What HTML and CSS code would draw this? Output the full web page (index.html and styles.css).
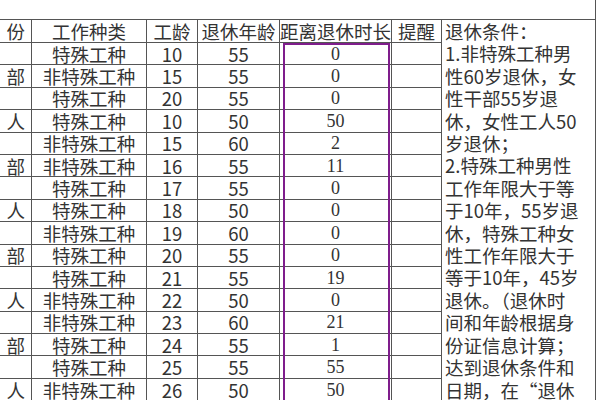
FILE: index.html
```html
<!DOCTYPE html>
<html lang="zh-CN">
<head>
<meta charset="utf-8">
<title>退休提醒表</title>
<link rel="stylesheet" href="styles.css">
</head>
<body>
<div class="topstrip"></div>
<div class="frame">
<div class="sheet">
  <div class="cell head id">份</div>
  <div class="cell head">工作种类</div>
  <div class="cell head">工龄</div>
  <div class="cell head">退休年龄</div>
  <div class="cell head">距离退休时长</div>
  <div class="cell head">提醒</div>
  <div class="note">退休条件：<br>1.非特殊工种男<br>性60岁退休，女<br>性干部55岁退<br>休，女性工人50<br>岁退休；<br>2.特殊工种男性<br>工作年限大于等<br>于10年，55岁退<br>休，特殊工种女<br>性工作年限大于<br>等于10年，45岁<br>退休。（退休时<br>间和年龄根据身<br>份证信息计算；<br>达到退休条件和<br>日期，在“退休</div>

  <div class="cell id"></div><div class="cell">特殊工种</div><div class="cell">10</div><div class="cell">55</div><div class="cell num">0</div><div class="cell"></div>
  <div class="cell id">部</div><div class="cell">非特殊工种</div><div class="cell">15</div><div class="cell">55</div><div class="cell num">0</div><div class="cell"></div>
  <div class="cell id"></div><div class="cell">特殊工种</div><div class="cell">20</div><div class="cell">55</div><div class="cell num">0</div><div class="cell"></div>
  <div class="cell id">人</div><div class="cell">特殊工种</div><div class="cell">10</div><div class="cell">50</div><div class="cell num">50</div><div class="cell"></div>
  <div class="cell id"></div><div class="cell">非特殊工种</div><div class="cell">15</div><div class="cell">60</div><div class="cell num">2</div><div class="cell"></div>
  <div class="cell id">部</div><div class="cell">非特殊工种</div><div class="cell">16</div><div class="cell">55</div><div class="cell num">11</div><div class="cell"></div>
  <div class="cell id"></div><div class="cell">特殊工种</div><div class="cell">17</div><div class="cell">55</div><div class="cell num">0</div><div class="cell"></div>
  <div class="cell id">人</div><div class="cell">特殊工种</div><div class="cell">18</div><div class="cell">50</div><div class="cell num">0</div><div class="cell"></div>
  <div class="cell id"></div><div class="cell">非特殊工种</div><div class="cell">19</div><div class="cell">60</div><div class="cell num">0</div><div class="cell"></div>
  <div class="cell id">部</div><div class="cell">特殊工种</div><div class="cell">20</div><div class="cell">55</div><div class="cell num">0</div><div class="cell"></div>
  <div class="cell id"></div><div class="cell">特殊工种</div><div class="cell">21</div><div class="cell">55</div><div class="cell num">19</div><div class="cell"></div>
  <div class="cell id">人</div><div class="cell">非特殊工种</div><div class="cell">22</div><div class="cell">50</div><div class="cell num">0</div><div class="cell"></div>
  <div class="cell id"></div><div class="cell">非特殊工种</div><div class="cell">23</div><div class="cell">60</div><div class="cell num">21</div><div class="cell"></div>
  <div class="cell id">部</div><div class="cell">特殊工种</div><div class="cell">24</div><div class="cell">55</div><div class="cell num">1</div><div class="cell"></div>
  <div class="cell id"></div><div class="cell">特殊工种</div><div class="cell">25</div><div class="cell">55</div><div class="cell num">55</div><div class="cell"></div>
  <div class="cell id">人</div><div class="cell">非特殊工种</div><div class="cell">26</div><div class="cell">50</div><div class="cell num">50</div><div class="cell"></div>
</div>
<div class="overlay">
  <div class="selection"></div>
</div>
</div>
</body>
</html>
```
FILE: styles.css
```css
html, body {
  margin: 0;
  padding: 0;
  background: #ffffff;
  overflow: hidden;
}

body {
  width: 600px;
  height: 400px;
  font-family: "Noto Sans CJK SC", "Noto Sans", sans-serif;
  font-size: 18.5px;
  color: #333333;
}

.topstrip {
  width: 596px;
  height: 19px;
  box-sizing: border-box;
  border-right: 1px solid #555555;
}

.frame {
  display: grid;
  width: 596px;
}

.sheet,
.overlay {
  grid-area: 1 / 1;
  display: grid;
  grid-template-columns: 32px 115px 51px 82px 112px 50px 154px;
  grid-template-rows: 24px repeat(16, 22.4px);
}

.overlay {
  pointer-events: none;
  z-index: 2;
}

.cell {
  box-sizing: border-box;
  border-right: 1px solid #555555;
  border-bottom: 1px solid #555555;
  display: flex;
  align-items: center;
  justify-content: center;
  white-space: nowrap;
  overflow: visible;
  line-height: 20px;
}

.head {
  border-top: 1px solid #555555;
}

.id {
  justify-content: flex-end;
  overflow: hidden;
  padding-right: 6px;
}

.num {
  font-family: "Liberation Serif", "DejaVu Serif", serif;
  font-size: 18px;
}

.note {
  grid-column: 7;
  grid-row: 1 / -1;
  box-sizing: border-box;
  border-top: 1px solid #555555;
  border-right: 1px solid #555555;
  padding-left: 3px;
  line-height: 22.4px;
  white-space: nowrap;
  overflow: hidden;
}

.selection {
  grid-column: 5;
  grid-row: 2 / -1;
  margin: 0 2px -4px 3px;
  border: 2px solid #7f1d8c;
  border-bottom: none;
}
```
